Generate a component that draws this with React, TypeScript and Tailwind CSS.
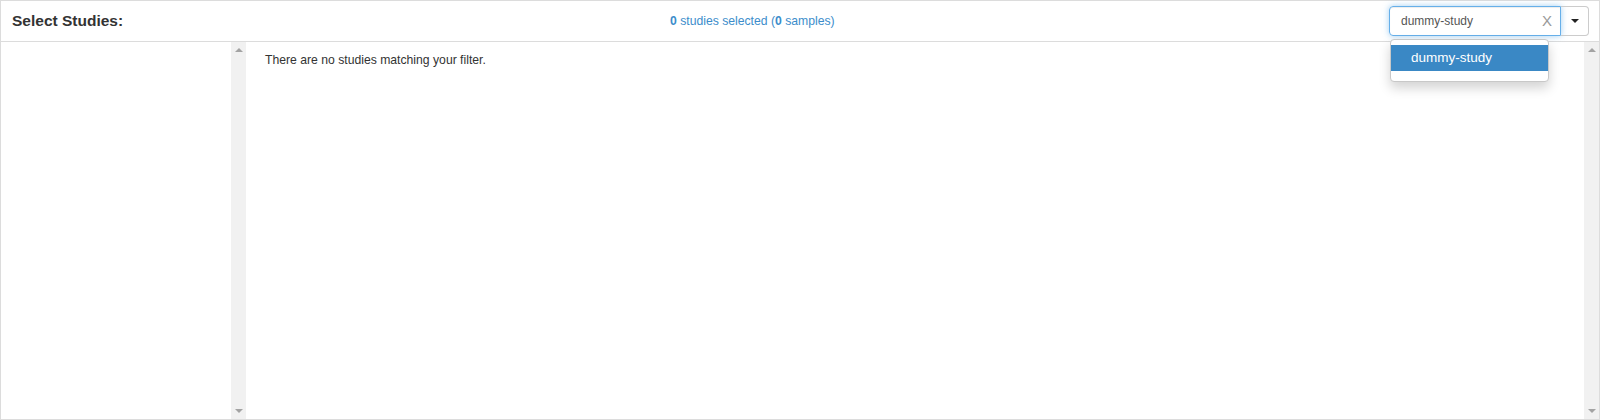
import React from 'react';

function ScrollTrack() {
  return (
    <div className="w-[15px] shrink-0 bg-[#f1f1f1] flex flex-col justify-between items-center py-[6px]">
      <div className="w-0 h-0 border-l-[4px] border-r-[4px] border-b-[4px] border-l-transparent border-r-transparent border-b-[#a3a3a3]" />
      <div className="w-0 h-0 border-l-[4px] border-r-[4px] border-t-[4px] border-l-transparent border-r-transparent border-t-[#a3a3a3]" />
    </div>
  );
}

export default function App() {
  return (
    <div className="w-[1600px] h-[420px] bg-white border border-[#dcdcdc] flex flex-col text-[#333] font-['Liberation_Sans',Arial,sans-serif]">
      {/* header */}
      <div className="h-[41px] shrink-0 border-b border-[#dcdcdc] flex items-center relative">
        <div className="w-[669px] shrink-0 pl-[11px] text-[15.5px] font-bold text-[#333]">Select Studies:</div>
        <div className="text-[12.2px] text-[#3c8dcb]">
          <span className="font-bold">0</span> studies selected (<span className="font-bold">0</span> samples)
        </div>
        <div className="flex-1" />
        <div className="flex mr-[10px]">
          <div className="w-[172px] h-[30px] border border-[#66afe9] rounded-l-[4px] shadow-[inset_0_1px_1px_rgba(0,0,0,0.075),0_0_6px_rgba(102,175,233,0.6)] flex items-center pl-[11px] pr-[8px] text-[12px] text-[#555]">
            <span className="flex-1">dummy-study</span>
            <span className="text-[15px] text-[#999] font-light">X</span>
          </div>
          <div className="w-[28px] h-[30px] border border-l-0 border-[#ccc] rounded-r-[4px] flex items-center justify-center">
            <div className="w-0 h-0 border-l-[4px] border-r-[4px] border-t-[4px] border-l-transparent border-r-transparent border-t-[#222]" />
          </div>
        </div>
        {/* dropdown menu */}
        <div className="absolute left-[1389px] top-[38px] w-[159px] h-[43px] bg-white border border-[#c8c8c8] rounded-[4px] shadow-[0_6px_12px_rgba(0,0,0,0.175)] pt-[5px] z-10">
          <div className="h-[26px] bg-[#3a88c5] text-white text-[13.5px] pl-[20px] flex items-center">dummy-study</div>
        </div>
      </div>
      {/* body */}
      <div className="flex-1 flex min-h-0">
        <div className="w-[230px] shrink-0" />
        <ScrollTrack />
        <div className="flex-1 pl-[19px] pt-[11px] text-[12.2px] leading-[14px] text-[#333]">
          There are no studies matching your filter.
        </div>
        <ScrollTrack />
      </div>
    </div>
  );
}
